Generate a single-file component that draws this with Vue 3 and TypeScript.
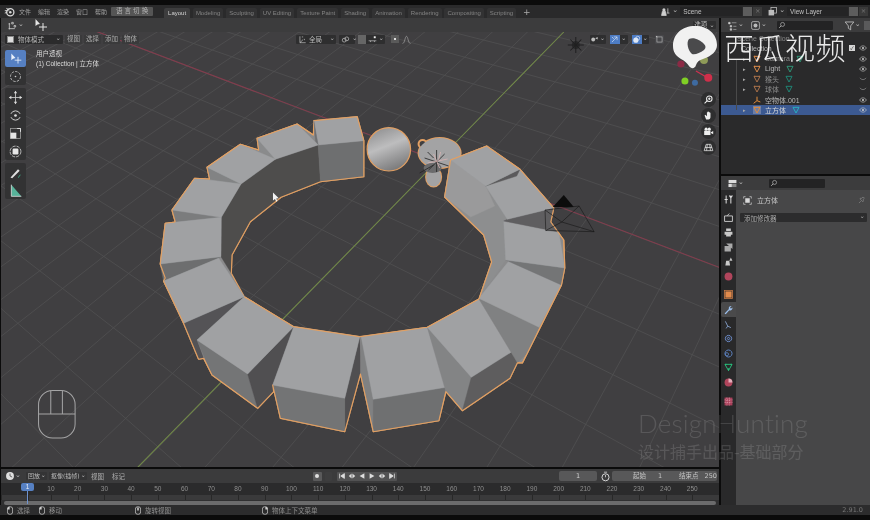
<script setup lang="ts">
type Pt = [number, number]

// ground plane grid, projected from the two vanishing points of the axes
const O: Pt = [437, 161]
const VR: Pt = [-620, -240]
const VG: Pt = [1100, -520]
const a = 0.031
const b = 0.037
const SPLIT = 1.5

const project = (u: number, v: number) => {
  const w = a * u + b * v + 1
  const x = (a * u * VR[0] + b * v * VG[0] + O[0]) / w
  const y = (a * u * VR[1] + b * v * VG[1] + O[1]) / w
  return `${x.toFixed(1)} ${y.toFixed(1)}`
}

// lines nearer than SPLIT go in the first path, the fainter far part in the second
const buildGrid = () => {
  let near = ''
  let far = ''
  for (let u = -30; u <= 30; u++) {
    const vMin = Math.max(-26, (0.05 - 1 - a * u) / b)
    const vCut = Math.min(30, Math.max(vMin, (SPLIT - 1 - a * u) / b))
    near += `M${project(u, vMin)}L${project(u, vCut)}`
    if (vCut < 30) far += `M${project(u, vCut)}L${project(u, 30)}`
  }
  for (let v = -26; v <= 30; v++) {
    const uMin = Math.max(-30, (0.05 - 1 - b * v) / a)
    const uCut = Math.min(30, Math.max(uMin, (SPLIT - 1 - b * v) / a))
    near += `M${project(uMin, v)}L${project(uCut, v)}`
    if (uCut < 30) far += `M${project(uCut, v)}L${project(30, v)}`
  }
  return { near, far }
}
const grid = buildGrid()

const silhouette =
  '313.3,120.7 356.7,116.7 363.3,140.7 363.3,176.7 320,181.7 280.7,197.3 250,221.7 231.7,255 231,273.3 244,296.7 293.3,326.7 359.3,336.7 426.7,327.3 478.3,299 491,262 483,235 444,197 450,160 486,146 519.3,169.3 553,208 550,222 563,240 564,268 560.7,285 521.7,363 516.7,362.7 509.3,378.3 461.7,410.7 445.3,391.7 438.3,420.7 372.7,431.7 360,374 344.3,431.7 280,418.3 272.3,385 273.3,391.7 257.3,408.3 211.7,375 203.3,358.3 198.3,359.3 183.3,323.3 163.3,281 165,278 160,264 165,223.3 175,222 171.7,210 194.3,178.3 209.3,179 206.7,167.3 240,144.3 258.3,150 256.7,138.3 296.7,124 313,135'

const faces: { c: string; p: string }[] = [
  // inner walls of the ring
  { c: '#4e4d4c', p: '221,217.3 240.7,184 275,159.3 317.7,145 320,181.7 280.7,197.3 250,221.7 231.7,255 231,273.3 220.7,256.7' },
  { c: '#8d8e8f', p: '450,160 485,186 506.7,219.3 503,221 505,260 478.3,299 491,262 483,235 444,197' },
  { c: '#9a9a9b', p: '450,160 485,186 494,206 470,217 444,197' },
  // back cubes, left side
  { c: '#6e6f70', p: '317.7,145 363.3,140.7 363.3,176.7 320,181.7' },
  { c: '#a0a1a3', p: '313.3,120.7 356.7,116.7 363.3,140.7 317.7,145' },
  { c: '#6f7071', p: '313.3,120.7 317.7,145 315,141' },
  { c: '#8a8b8c', p: '256.7,138.3 275,159.3 258.3,150' },
  { c: '#a0a1a3', p: '256.7,138.3 296.7,124 317.7,145 275,159.3' },
  { c: '#828384', p: '206.7,167.3 240.7,184 209.3,179' },
  { c: '#a0a1a3', p: '240,144.3 275,159.3 240.7,184 206.7,167.3' },
  { c: '#7b7c7d', p: '171.7,210 221,217.3 175,222' },
  { c: '#a0a1a3', p: '194.3,178.3 240.7,184 221,217.3 171.7,210' },
  { c: '#6d6e6f', p: '160,264 220.7,256.7 163.3,281' },
  { c: '#a0a1a3', p: '165,223.3 221,217.3 220.7,256.7 160,264' },
  // lower left
  { c: '#545356', p: '183.3,323.3 244,296.7 196.7,340 203.3,358.3 198.3,359.3' },
  { c: '#a0a1a3', p: '163.3,281 218.3,258.3 244,296.7 183.3,323.3' },
  { c: '#747576', p: '196.7,340 247.3,374 257.3,408.3 211.7,375' },
  { c: '#504f51', p: '247.3,374 293.3,326.7 272.3,385 273.3,391.7 257.3,408.3' },
  { c: '#a0a1a3', p: '244,296.7 293.3,326.7 247.3,374 196.7,340' },
  // lower middle
  { c: '#504f51', p: '359.3,336.7 344.3,398.3 344.3,431.7 360,374' },
  { c: '#737475', p: '272.3,385 344.3,398.3 344.3,431.7 280,418.3' },
  { c: '#a0a1a3', p: '293.3,326.7 359.3,336.7 344.3,398.3 272.3,385' },
  { c: '#808182', p: '360.7,336.7 372.7,399.3 372.7,431.7 360,374' },
  { c: '#6f7071', p: '372.7,399.3 445.3,387.3 438.3,420.7 372.7,431.7' },
  { c: '#a0a1a3', p: '360.7,336.7 426.7,327.3 445.3,387.3 372.7,399.3' },
  // lower right
  { c: '#838485', p: '426.7,327.3 470.7,377.3 461.7,410.7 445.3,391.7' },
  { c: '#5e5d5e', p: '470.7,377.3 523.3,344 516.7,362.7 509.3,378.3 461.7,410.7' },
  { c: '#a0a1a3', p: '426.7,327.3 478.3,299.3 523.3,344 470.7,377.3' },
  { c: '#808182', p: '478.3,299 538.3,327.3 526.7,353.3 516.7,362.7' },
  { c: '#a0a1a3', p: '478.3,298.3 509,260 560.7,285 538.3,327.3' },
  // right side, going back up
  { c: '#747576', p: '505,260 564,268 560.7,285' },
  { c: '#a0a1a3', p: '503,221 558,232 564,268 505,260' },
  { c: '#5f5e60', p: '506.7,219.3 553,208 550,222 558,232 503,221' },
  { c: '#a0a1a3', p: '485,186 519.3,169.3 553,208 506.7,219.3' },
  { c: '#5b5a5c', p: '485,186 519.3,169.3 516,176' },
  { c: '#a0a1a3', p: '450,160 486,146 519.3,169.3 485,186' }
]

const menus = ['文件', '编辑', '渲染', '窗口', '帮助']
const tabs = ['Layout', 'Modeling', 'Sculpting', 'UV Editing', 'Texture Paint', 'Shading', 'Animation', 'Rendering', 'Compositing', 'Scripting']

interface Row {
  label: string
  icon: string
  tail?: string
  eye?: string
  cls?: string
}
const rows: Row[] = [
  { label: 'Camera', icon: '#d98a4a', tail: '#2f9a7a', cls: 'faded' },
  { label: 'Light', icon: '#d98a4a', tail: '#2f9a7a' },
  { label: '猴头', icon: '#a9714a', tail: '#1f8a78', eye: 'closed', cls: 'faded' },
  { label: '球体', icon: '#a9714a', tail: '#1f8a78', eye: 'closed', cls: 'faded' },
  { label: '空物体.001', icon: '#e08c3c', cls: 'noarrow' },
  { label: '立方体', icon: '#e08c3c', tail: '#27b3c4', cls: 'picked' }
]

const frames = Array.from({ length: 25 }, (_, i) => (i + 1) * 10)

const sideTabs = [
  { id: 'render', c: '#c9c9c9' },
  { id: 'print', c: '#c9c9c9' },
  { id: 'layer', c: '#c9c9c9' },
  { id: 'scene', c: '#c9c9c9' },
  { id: 'world', c: '#b0455c' }
]
const dataTabs = [
  { c: '#7f9ac4', d: 'M3 3l3 6 4 2M3 3h0M6 9l-2 3' },
  { c: '#6f8fd0', d: 'M7 3a4 4 0 1 0 .01 0M7 5.5a1.5 1.5 0 1 0 .01 0' },
  { c: '#5f86c8', d: 'M7 2.5a4.5 4.5 0 1 0 .01 0M5 6a2 2 0 1 0 .01 0' },
  { c: '#27c07c', d: 'M2.5 3h9L7 11zM2.5 3l2 0M11.5 3l-2 0M7 11v-3' }
]
</script>

<template>
  <div class="screen">
    <header class="topbar">
      <svg class="blogo" viewBox="0 0 14 14"><circle cx="8" cy="8" r="4.6" fill="none" stroke="#d8d8d8" stroke-width="1.6" /><circle cx="8" cy="8" r="1.6" fill="#d8d8d8" /><path d="M1 6h5M3 3l4 2M1 9l3-1" stroke="#d8d8d8" stroke-width="1.2" /></svg>
      <nav class="menus"><span v-for="m in menus" :key="m">{{ m }}</span></nav>
      <button class="lang">语 言 切 换</button>
      <nav class="tabs">
        <span v-for="(t, i) in tabs" :key="t" class="tab" :class="{ on: i === 0 }">{{ t }}</span>
        <span class="plus">+</span>
      </nav>
      <div class="selectors">
        <svg class="ico scene-ico" viewBox="0 0 14 14"><circle cx="5" cy="5" r="2" fill="#cfcfcf" /><path d="M2 12l1-5h4l1 5zM10 3v6M9 9h3" stroke="#cfcfcf" fill="#cfcfcf" /></svg>
        <span class="chev">⌄</span>
        <span class="field scene-field">Scene</span>
        <span class="sq lit"></span><span class="sq">×</span>
        <svg class="ico layer-ico" viewBox="0 0 14 14"><rect x="2" y="5" width="7" height="7" fill="#bdbdbd" /><rect x="5" y="2" width="7" height="7" fill="none" stroke="#bdbdbd" /></svg>
        <span class="chev">⌄</span>
        <span class="field layer-field">View Layer</span>
        <span class="sq lit"></span><span class="sq">×</span>
      </div>
    </header>

    <main class="main">
      <div class="left">
        <section class="viewport">
          <svg class="scene" viewBox="1 18 717 449" preserveAspectRatio="none">
            <defs>
              <linearGradient id="ball" x1="0.2" y1="0" x2="0.6" y2="1">
                <stop offset="0" stop-color="#8f8f90" />
                <stop offset="0.45" stop-color="#bdbdbe" />
                <stop offset="1" stop-color="#79797a" />
              </linearGradient>
            </defs>
            <path :d="grid.far" class="grid far" />
            <path :d="grid.near" class="grid" />
            <line x1="90" y1="29" x2="720" y2="268" class="axis-x" />
            <line x1="563" y1="32" x2="130" y2="475" class="axis-y" />

            <g class="sun">
              <circle cx="575" cy="45" r="4" />
              <path d="M575 37v16M567 45h16M569.5 39.5l11 11M580.5 39.5l-11 11" />
            </g>

            <circle cx="388.3" cy="149.3" r="21.7" fill="url(#ball)" stroke="#e2a063" stroke-width="1.2" />

            <g class="monkey">
              <circle cx="422" cy="144" r="5" />
              <ellipse cx="439" cy="153" rx="22" ry="16" />
              <ellipse cx="433" cy="177" rx="8.500" ry="10.500" />
              <circle cx="422" cy="144" r="3" class="hole" />
              <ellipse cx="439" cy="153" rx="21" ry="15" class="inner" />
              <ellipse cx="433" cy="177" rx="7.500" ry="9.500" class="inner" />
              <ellipse cx="432" cy="168" rx="9" ry="5" class="shade" />
            </g>
            <path class="light-a" d="M436 150v22M424 158l24 8M428 170l16-16M419 173l14-8M433 158l-6-6" />
            <path class="light-b" d="M433 154l6 14M427 163l20-4M440 152l-2 8" />

            <polygon :points="silhouette" class="outline" />
            <polygon v-for="(f, i) in faces" :key="i" :points="f.p" :fill="f.c" :stroke="f.c" stroke-width="0.4" />
            <polyline points="320,181.7 280.7,197.3 250,221.7 231.7,255 231,273.3" class="edge" />
            <polyline points="244,296.7 293.3,326.7 359.3,336.7 426.7,327.3 478.3,299" class="edge" />
            <polyline points="313.3,120.7 356.7,116.7 363.3,140.7 363.3,176.7 320,181.7" class="edge" />
            <polyline points="171.7,210 194.3,178.3 209.3,179 206.7,167.3 240,144.3 258.3,150 256.7,138.3 296.7,124 313,135" class="edge" />
            <polyline points="175,222 171.7,210" class="edge" />
            <polyline points="198.3,359.3 183.3,323.3 163.3,281 165,278 160,264 165,223.3 175,222" class="edge" />
            <polyline points="198.3,359.3 203.3,358.3 211.7,375 257.3,408.3 273.3,391.7 272.3,385 280,418.3 344.3,431.7 360,374 372.7,431.7 438.3,420.7 445.3,391.7 461.7,410.7 509.3,378.3 516.7,362.7 521.7,363 560.7,285 564,268 563,240 550,222 553,208 519.3,169.3 486,146 450,160 444,197 483,235 491,262 478.3,299" class="edge" />

            <polygon points="563,195 552,207 573,207" fill="#0c0c0c" />
            <path class="camera" d="M544.3 210L578.3 206L593.3 231.7L545 230.5ZM544.3 210L561 222L545 230.5M578.3 206L561 222L593.3 231.7" />

            <path d="M272.6 192.500l0 8 2-1.600 1.300 2.800 1.200-.6-1.300-2.700 2.600-.1z" fill="#f2f2f2" />

            <g class="mouse">
              <rect x="38.500" y="390.500" width="36.500" height="47.500" rx="14" />
              <path d="M38.500 414h36.500M50.700 390.500V414M62.300 390.500V414" />
            </g>

            <g class="nav-gizmo">
              <line x1="695" y1="71" x2="707" y2="78" stroke="#cf3150" stroke-width="1.300" />
              <circle cx="680" cy="64" r="3.600" fill="#8b2a45" />
              <circle cx="693.300" cy="59" r="4" fill="#86a8d8" />
              <circle cx="703" cy="60" r="4" fill="#8e9a58" />
              <circle cx="684" cy="81" r="3.500" fill="#80cf25" />
              <circle cx="694" cy="82.700" r="3" fill="#3e6aa0" />
              <circle cx="707.300" cy="77.700" r="4" fill="#cf2f4a" />
            </g>
          </svg>

          <div class="tool-header">
            <svg class="ico t-a" viewBox="0 0 14 14"><path d="M2 11h8M3 12V4M2 5h2M6 3h2v2H6zM9 7h2v2H9z" stroke="#cfcfcf" fill="none" /></svg>
            <span class="chev">⌄</span>
            <svg class="ico t-b" viewBox="0 0 14 14"><path d="M1.500 1v7l2-1.500L6 6z" fill="#e6e6e6" /><path d="M9 5v8M5 9h8" stroke="#e6e6e6" /></svg>
            <span class="opts">选项 ⌄</span>
          </div>

          <div class="view-header">
            <div class="v-left">
              <span class="mode"><i class="obj"></i>物体模式<em>⌄</em></span>
              <span class="vbtn" v-for="m in ['视图', '选择', '添加', '物体']" :key="m">{{ m }}</span>
            </div>
            <div class="v-mid">
              <span class="pill global"><svg class="ico" viewBox="0 0 14 14"><path d="M3 2v10h9M3 12l5-5M6 3h2M10 6v2" stroke="#cfcfcf" fill="none" /></svg>全局<em>⌄</em></span>
              <span class="pill link"><svg class="ico" viewBox="0 0 14 14"><circle cx="5" cy="8" r="3" fill="none" stroke="#cfcfcf" /><circle cx="9" cy="6" r="3" fill="none" stroke="#cfcfcf" /></svg><em>⌄</em></span>
              <span class="pill snap"><b class="snap-a"></b><svg class="ico" viewBox="0 0 14 14"><path d="M1 9h12M4 9v2M10 9v2" stroke="#cfcfcf" /><rect x="9" y="2" width="3" height="3" fill="#eee" /></svg><em>⌄</em></span>
              <span class="prop"><b class="dot"></b><svg class="ico" viewBox="0 0 14 14"><path d="M2 12c3 0 3-9 5-9s2 9 5 9" stroke="#9a9a9a" fill="none" /></svg></span>
            </div>
            <div class="v-right">
              <span class="gz"><svg class="ico" viewBox="0 0 14 14"><circle cx="5" cy="7" r="3" fill="#bdbdbd" /><path d="M8 5l4-2v4z" fill="#bdbdbd" /></svg><em>⌄</em></span>
              <span class="gz"><b class="blue"><svg class="ico" viewBox="0 0 14 14"><path d="M3 11l8-8M6 3h5v5M3 3l3 3" stroke="#dfe8f5" fill="none" /></svg></b><em>⌄</em></span>
              <span class="gz"><b class="blue"><svg class="ico" viewBox="0 0 14 14"><circle cx="6" cy="8" r="4" fill="#dfe8f5" /><circle cx="9" cy="5" r="3" fill="none" stroke="#dfe8f5" /></svg></b><em>⌄</em></span>
              <span class="gz box"><svg class="ico" viewBox="0 0 14 14"><rect x="3" y="3" width="8" height="8" fill="none" stroke="#bbb" /><rect x="1.500" y="1.500" width="2" height="2" fill="#bbb" /></svg></span>
            </div>
          </div>

          <div class="stats">
            <p>用户透视</p>
            <p>(1) Collection | 立方体</p>
          </div>

          <aside class="tools">
            <div class="tgroup">
              <span class="tool active"><svg viewBox="0 0 18 18"><path d="M4 3v8l2-1.600L9 8.500z" fill="#eaf1fb" /><path d="M12 7v8M8 11h8" stroke="#eaf1fb" /></svg></span>
              <span class="tool"><svg viewBox="0 0 18 18"><circle cx="9" cy="9" r="6" fill="none" stroke="#cfcfcf" stroke-dasharray="3 1.500" /><circle cx="9" cy="9" r="1" fill="#cfcfcf" /></svg></span>
            </div>
            <div class="tgroup">
              <span class="tool"><svg viewBox="0 0 18 18"><path d="M9 2v14M2 9h14" stroke="#cfcfcf" /><path d="M9 1l2 3H7zM9 17l2-3H7zM1 9l3-2v4zM17 9l-3-2v4z" fill="#dedede" /></svg></span>
              <span class="tool"><svg viewBox="0 0 18 18"><path d="M3.500 7a6 6 0 0 1 11 0M3.500 11a6 6 0 0 0 11 0" stroke="#cfcfcf" fill="none" stroke-width="1.200" /><circle cx="9" cy="9" r="1.600" fill="#dedede" /></svg></span>
              <span class="tool"><svg viewBox="0 0 18 18"><rect x="3" y="3" width="12" height="12" fill="none" stroke="#999" /><rect x="3" y="8" width="7" height="7" fill="#e5e5e5" /><path d="M11 3h4v4" stroke="#eee" fill="none" /></svg></span>
              <span class="tool"><svg viewBox="0 0 18 18"><circle cx="9" cy="9" r="6.500" fill="none" stroke="#cfcfcf" stroke-dasharray="4 1.200" /><rect x="5.500" y="5.500" width="7" height="7" rx="1.500" fill="#e6e6e6" /></svg></span>
            </div>
            <div class="tgroup">
              <span class="tool"><svg viewBox="0 0 18 18"><path d="M3 15L12 5l2 2-9 9z" fill="#e0e0e0" /><path d="M12 15c2 0 1-3 3-3" stroke="#3fb08a" fill="none" /></svg></span>
              <span class="tool"><svg viewBox="0 0 18 18"><path d="M4 2v14h12z" fill="#57b39a" /><path d="M4 2v14h12" stroke="#d8d8d8" fill="none" /></svg></span>
            </div>
          </aside>

          <aside class="navs">
            <span class="nbtn"><svg viewBox="0 0 14 14"><circle cx="8" cy="6" r="3.500" fill="none" stroke="#eee" stroke-width="1.300" /><path d="M5.500 8.500L2 12M8 4.500v3M6.500 6h3" stroke="#eee" stroke-width="1.300" /></svg></span>
            <span class="nbtn"><svg viewBox="0 0 14 14"><path d="M4 12L2 7l1-1 2 2V3h1v3-4h1.200v4-3.500h1.200V6V3.500h1.100V9c0 2-1 3-2.500 3z" fill="#eee" /></svg></span>
            <span class="nbtn"><svg viewBox="0 0 14 14"><rect x="1.500" y="6" width="8" height="5.500" fill="#eee" /><circle cx="4" cy="4" r="2" fill="#eee" /><circle cx="8" cy="4" r="2" fill="#eee" /><path d="M10 8l3-1.500v4L10 9z" fill="#eee" /></svg></span>
            <span class="nbtn"><svg viewBox="0 0 14 14"><path d="M4 3h6l2.500 8h-11zM2.500 7h9M5.500 3l-1 8M8.500 3l1 8" stroke="#dcdcdc" fill="none" /></svg></span>
          </aside>
        </section>

        <section class="timeline">
          <div class="tl-head">
            <svg class="ico clock" viewBox="0 0 14 14"><circle cx="7" cy="7" r="5.500" fill="#e0e0e0" /><path d="M7 3.500V7l3 1.500" stroke="#333" fill="none" /></svg>
            <span class="chev">⌄</span>
            <span class="tbtn play">回放<em>⌄</em></span>
            <span class="tbtn key">抠像(插帧)<em>⌄</em></span>
            <span class="tplain first">视图</span>
            <span class="tplain">标记</span>
            <div class="transport">
              <span class="rec"><i></i></span>
              <span class="rec off"></span>
              <span class="tr-row">
                <svg viewBox="0 0 10 10"><path d="M2 2v6M8 2v6L3.500 5z" stroke="#ddd" fill="#ddd" /></svg>
                <svg viewBox="0 0 10 10"><path d="M4.500 2v6L1 5zM5.500 2v6L9 5z" fill="#ddd" /></svg>
                <svg viewBox="0 0 10 10"><path d="M8 1.500v7L2 5z" fill="#ddd" /></svg>
                <svg viewBox="0 0 10 10"><path d="M2 1.500v7L8 5z" fill="#ddd" /></svg>
                <svg viewBox="0 0 10 10"><path d="M4.500 2v6L1 5zM5.500 2v6L9 5z" fill="#ddd" /></svg>
                <svg viewBox="0 0 10 10"><path d="M8 2v6M2 2v6L6.500 5z" stroke="#ddd" fill="#ddd" /></svg>
              </span>
            </div>
            <div class="range">
              <span class="rfield cur">1</span>
              <svg class="ico stopwatch" viewBox="0 0 14 14"><circle cx="7" cy="8" r="4.500" fill="none" stroke="#ddd" stroke-width="1.200" /><path d="M5 1.500h4M7 5v3" stroke="#ddd" /></svg>
              <span class="rfield span"><i>起始</i><i>1</i><u></u><i>结束点</i><i>250</i></span>
            </div>
          </div>
          <div class="ruler">
            <span v-for="f in frames" :key="f" class="mark">{{ f }}</span>
          </div>
          <div class="ticks"></div>
          <div class="scroll"><i></i></div>
          <div class="playhead"><b>1</b></div>
        </section>
      </div>

      <div class="right">
        <section class="outliner">
          <div class="o-head">
            <svg class="ico" viewBox="0 0 14 14"><path d="M2 3h2v2H2zM6 3.500h6M4 7h2v2H4zM8 8h4M4 11h2v2H4zM8 12h4" fill="#ccc" stroke="#ccc" stroke-width="0.700" /></svg>
            <span class="chev">⌄</span>
            <svg class="ico disp" viewBox="0 0 14 14"><rect x="2" y="2" width="10" height="10" rx="2" fill="none" stroke="#bbb" /><circle cx="7" cy="7" r="2.500" fill="#bbb" /></svg>
            <span class="chev">⌄</span>
            <span class="search"><svg viewBox="0 0 14 14"><circle cx="8" cy="6" r="3.500" fill="none" stroke="#ccc" /><path d="M5.500 8.500L2 12" stroke="#ccc" stroke-width="1.300" /></svg></span>
            <svg class="ico filter" viewBox="0 0 14 14"><path d="M1.500 2.500h11l-4 5v5l-3-2v-3z" fill="none" stroke="#c9c9c9" /></svg>
            <span class="chev">⌄</span>
            <span class="newcol"></span>
          </div>
          <div class="o-body">
            <div class="orow scenecol">Scene Collection</div>
            <div class="orow coll">
              <span class="olabel">Collection</span>
              <i class="check">✓</i>
              <svg class="eye" viewBox="0 0 14 10"><path d="M1 5c3-5 9-5 12 0-3 5-9 5-12 0z" fill="none" stroke="#cfcfcf" /><circle cx="7" cy="5" r="1.800" fill="#cfcfcf" /></svg>
            </div>
            <div v-for="r in rows" :key="r.label" class="orow item" :class="r.cls">
              <span class="arrow">▸</span>
              <svg class="rico" viewBox="0 0 12 12"><path v-if="r.label !== '空物体.001'" d="M1.500 2h9L6 10.500zM1.500 2h2M10.500 2h-2" :stroke="r.icon" fill="none" stroke-width="1.500" /><path v-else d="M6 1v6M6 7L1 11M6 7l5 2" :stroke="r.icon" fill="none" stroke-width="1.500" /></svg>
              <span class="olabel">{{ r.label }}</span>
              <svg v-if="r.tail" class="rtail" viewBox="0 0 12 12"><path d="M1.500 2h9L6 10.500z" :stroke="r.tail" fill="none" stroke-width="1.400" /></svg>
              <svg class="eye" viewBox="0 0 14 10">
                <path v-if="r.eye === 'closed'" d="M1.500 3c3 4 8 4 11 0" fill="none" stroke="#a9a9a9" />
                <template v-else><path d="M1 5c3-5 9-5 12 0-3 5-9 5-12 0z" fill="none" stroke="#cfcfcf" /><circle cx="7" cy="5" r="1.800" fill="#cfcfcf" /></template>
              </svg>
            </div>
          </div>
          <i class="tree-line"></i>
        </section>

        <section class="props">
          <div class="p-head">
            <svg class="ico" viewBox="0 0 14 14"><rect x="2" y="2.500" width="10" height="4" fill="#ddd" /><rect x="2" y="7.500" width="10" height="4" fill="#888" /><rect x="2" y="7.500" width="4" height="4" fill="#ddd" /></svg>
            <span class="chev">⌄</span>
            <span class="search"><svg viewBox="0 0 14 14"><circle cx="8" cy="6" r="3.500" fill="none" stroke="#ccc" /><path d="M5.500 8.500L2 12" stroke="#ccc" stroke-width="1.300" /></svg></span>
          </div>
          <div class="p-body">
            <nav class="p-tabs">
              <span class="ptab top"><svg viewBox="0 0 14 14"><path d="M4 2v10M2 7h4M10 2v3M8 2l2 3 2-3M10 5v7" stroke="#dcdcdc" fill="none" stroke-width="1.300" /></svg></span>
              <span v-for="t in sideTabs" :key="t.id" class="ptab">
                <svg viewBox="0 0 14 14">
                  <path v-if="t.id === 'render'" d="M2 5h10v7H2zM5 5l3-3" fill="none" :stroke="t.c" stroke-width="1.200" />
                  <path v-else-if="t.id === 'print'" d="M4 2h6v3H4zM2 6h10v4H2zM4 9h6v3H4z" :fill="t.c" />
                  <path v-else-if="t.id === 'layer'" d="M2 5h8v7H2zM4 2h8v7" :fill="t.c" opacity="0.800" />
                  <path v-else-if="t.id === 'scene'" d="M3 12l1-6h4l1 6zM10 2l2 4-4 0z" :fill="t.c" />
                  <circle v-else cx="7" cy="7" r="5" :fill="t.c" />
                </svg>
              </span>
              <span class="ptab gap"><svg viewBox="0 0 14 14"><rect x="3" y="3" width="8" height="8" fill="#e08a4c" /><rect x="2" y="2" width="10" height="10" fill="none" stroke="#c77a45" /></svg></span>
              <span class="ptab on"><svg viewBox="0 0 14 14"><path d="M2 12l5.500-5.500c-.8-2 .8-4.500 3.500-4L9 4.500 10 6l2-1.500c.5 2.500-2 4.500-4 3.500L3.500 13z" fill="#9cc0ee" /></svg></span>
              <span v-for="(t, i) in dataTabs" :key="i" class="ptab"><svg viewBox="0 0 14 14"><path :d="t.d" fill="none" :stroke="t.c" stroke-width="1.200" /></svg></span>
              <span class="ptab"><svg viewBox="0 0 14 14"><circle cx="7" cy="7" r="5" fill="#b0455c" /><path d="M7 7V2a5 5 0 0 1 5 5z" fill="#e3b0bc" /></svg></span>
              <span class="ptab gap"><svg viewBox="0 0 14 14"><rect x="2" y="2" width="10" height="10" fill="#a8405a" /><path d="M2 5h10M2 8h10M5 2v10M8 2v10" stroke="#e6a4b4" stroke-dasharray="1.500 1.500" /></svg></span>
            </nav>
            <div class="p-main">
              <div class="p-title">
                <svg class="ico obj-ico" viewBox="0 0 14 14"><rect x="3.500" y="3.500" width="7" height="7" fill="#d9d9d9" /><path d="M1 4V1h3M10 1h3v3M13 10v3h-3M4 13H1v-3" fill="none" stroke="#d9d9d9" /></svg>
                <span>立方体</span>
                <svg class="ico pin" viewBox="0 0 14 14"><path d="M3 11l3-3M5 5l4 4 1-1-.5-2.500 2-2L9.500 1.500l-2 2L5 3.500z" fill="none" stroke="#8d8d8d" /></svg>
              </div>
              <div class="addmod"><span>添加修改器</span><em>⌄</em></div>
            </div>
          </div>
        </section>
      </div>
    </main>

    <footer class="status">
      <span class="hint h1"><svg viewBox="0 0 8 11"><rect x="0.500" y="0.500" width="7" height="10" rx="3" fill="none" stroke="#cfcfcf" /><path d="M.5 4V3.500a3 3 0 0 1 3-3V4z" fill="#cfcfcf" /></svg>选择</span>
      <span class="hint h2"><svg viewBox="0 0 8 11"><rect x="0.500" y="0.500" width="7" height="10" rx="3" fill="none" stroke="#cfcfcf" /><path d="M.5 4V3.500a3 3 0 0 1 3-3V4z" fill="#cfcfcf" /></svg>移动</span>
      <span class="hint h3"><svg viewBox="0 0 8 11"><rect x="0.500" y="0.500" width="7" height="10" rx="3" fill="none" stroke="#cfcfcf" /><rect x="3" y="1.500" width="2" height="4" fill="#cfcfcf" /></svg>旋转视图</span>
      <span class="hint h4"><svg viewBox="0 0 8 11"><rect x="0.500" y="0.500" width="7" height="10" rx="3" fill="none" stroke="#cfcfcf" /><path d="M7.500 4V3.500a3 3 0 0 0-3-3V4z" fill="#cfcfcf" /></svg>物体上下文菜单</span>
      <span class="ver">2.91.0</span>
    </footer>

    <!-- video watermarks sit over every panel -->
    <div class="xigua">
      <svg class="xg-logo" viewBox="0 0 46 44"><path d="M23 1C10 1 1 9 1 21c0 6 3 10 8 13 4 2 6 4 8 7 2 3 6 3 7-1 1-3 3-5 7-6 9-3 14-8 14-14C45 9 36 1 23 1z" fill="#f1f1f1" /><path d="M17 14c5-2 11 1 15 5 2 2 2 4 0 6-4 3-9 5-12 4-4-3-6-12-3-15z" fill="#4a4a4c" /></svg>
      <span class="xg-text">西瓜视频</span>
    </div>
    <div class="brand-hunt">
      <p class="dh">DesignHunting</p>
      <p class="dh-cn">设计捕手出品-基础部分</p>
    </div>
  </div>
</template>

<style scoped>
.screen {
  width: 870px;
  height: 520px;
  background: #0b0b0b;
  overflow: hidden;
  position: relative;
  display: flex;
  flex-direction: column;
  padding: 5px 0;
  box-sizing: border-box;
  font-family: "DejaVu Sans", "Noto Sans CJK SC", sans-serif;
  font-size: 6.5px;
  color: #bdbdbd;
  filter: blur(0.35px);
}
p { margin: 0; }
em { font-style: normal; }
.ico { width: 11px; height: 11px; flex: none; }
.chev { font-size: 7px; color: #bbb; line-height: 6px; margin-top: -3px; }

.topbar {
  height: 13px;
  background: #2a2a2b;
  display: flex;
  align-items: center;
  flex: none;
}
.blogo { width: 11px; height: 11px; margin-left: 4px; flex: none; }
.menus { display: flex; gap: 7px; margin-left: 4px; color: #a0a0a0; font-size: 6px; }
.lang {
  margin-left: 4px;
  width: 42px;
  height: 9px;
  padding: 0;
  border: 0;
  border-radius: 1px;
  background: #555;
  color: #b5b5b5;
  font: inherit;
  line-height: 9px;
}
.tabs { display: flex; margin-left: 11px; align-self: flex-end; height: 10px; }
.tab { padding: 0 3.200px; line-height: 10px; color: #848484; margin-right: 2.600px; border-radius: 2px 2px 0 0; background: #323233; font-family: "Liberation Sans", sans-serif; font-size: 6px; }
.tab.on { background: #3d3d3e; color: #d5d5d5; padding: 0 4px; }
.plus { color: #aaa; font-size: 9px; line-height: 9px; margin-left: 4px; }
.selectors { margin-left: auto; display: flex; align-items: center; padding-right: 2px; }
.scene-ico, .layer-ico { margin-right: 1px; }
.field { height: 9px; line-height: 9px; background: #242425; color: #c0c0c0; padding-left: 3px; box-sizing: border-box; margin-left: 2px; font-family: "Liberation Sans", sans-serif; }
.scene-field { width: 62px; }
.layer-field { width: 61px; }
.sq { width: 9px; height: 9px; margin-left: 1px; background: #3a3a3a; color: #777; line-height: 8px; text-align: center; }
.sq.lit { background: #5d5d5d; }
.sq + .layer-ico { margin-left: 5px; }

.main { flex: 1; display: flex; min-height: 0; }
.left { width: 719px; flex: none; padding-left: 1px; box-sizing: border-box; display: flex; flex-direction: column; gap: 2px; }
.right { width: 149px; margin-left: 2px; display: flex; flex-direction: column; gap: 2px; flex: none; }

/* 3D view */
.viewport { height: 449px; flex: none; position: relative; overflow: hidden; background: #403f41; }
.scene { position: absolute; inset: 0; width: 100%; height: 100%; display: block; }
.grid { stroke: #505052; stroke-width: 0.800; fill: none; }
.grid.far { stroke: #49494b; stroke-width: 0.600; }
.axis-x { stroke: #843c4d; stroke-width: 1; }
.axis-y { stroke: #738c48; stroke-width: 1; }
.sun path { stroke: #1f1f20; stroke-width: 1; }
.sun circle { fill: #2a2a2b; }
.monkey > * { fill: #e2a063; }
.monkey .inner { fill: #a3a3a4; }
.monkey .hole { fill: #403f41; }
.monkey .shade { fill: #6b6b6c; }
.light-a { stroke: #222; stroke-width: 0.800; fill: none; }
.light-b { stroke: #d9b3b3; stroke-width: 0.800; fill: none; }
.outline { fill: #8b8b8c; stroke: #e2a063; stroke-width: 1.200; stroke-linejoin: round; }
.edge { fill: none; stroke: #e2a063; stroke-width: 1.100; stroke-linejoin: round; }
.camera { fill: none; stroke: #161616; stroke-width: 0.600; }
.mouse { fill: none; stroke: #a5a5a6; stroke-width: 1; }

.tool-header {
  position: relative;
  height: 14px;
  background: #3c3c3d;
  display: flex;
  align-items: center;
  padding-left: 6px;
}
.t-b { margin-left: 10px; width: 14px; height: 14px; }
.opts { margin-left: auto; margin-right: 3px; width: 23px; height: 8px; background: #2e2e2f; line-height: 8px; text-align: center; border-radius: 1px; }

.view-header { position: relative; height: 14px; display: flex; align-items: center; padding-left: 4px; }
.v-left { display: flex; gap: 2px; width: 291px; }
.mode { width: 58px; height: 9px; background: #2b2b2c; border-radius: 1px; display: flex; align-items: center; color: #b5b5b5; }
.obj { width: 5px; height: 5px; background: #ddd; margin: 0 5px 0 3px; outline: 1px solid #888; }
.mode em { margin-left: auto; margin-right: 2px; margin-top: -3px; }
.vbtn { width: 17px; height: 9px; background: #3a3a3b; line-height: 9px; text-align: center; border-radius: 1px; color: #aaa; }
.v-mid { display: flex; align-items: center; gap: 3px; }
.pill { height: 9px; background: #2e2e2f; border-radius: 1px; display: flex; align-items: center; color: #bbb; }
.pill em { margin: -3px 1px 0 auto; }
.pill .ico { width: 9px; height: 9px; margin: 0 2px; }
.global { width: 40px; }
.link { width: 16px; }
.snap { width: 27px; }
.snap-a { width: 9px; height: 9px; background: #666; }
.prop { display: flex; align-items: center; margin-left: 3px; width: 21px; }
.dot { width: 8px; height: 8px; background: #5a5a5a; position: relative; }
.dot::after { content: ""; display: block; width: 2px; height: 2px; margin: 3px; background: #ddd; }
.prop .ico { margin-left: 2px; }
.v-right { margin-left: auto; margin-right: 55px; display: flex; align-items: center; gap: 4px; }
.gz { display: flex; align-items: center; color: #bbb; height: 9px; background: #2e2e2f; border-radius: 1px; }
.gz .ico { width: 9px; height: 9px; display: block; }
.gz em { margin: -3px 1px 0; }
.blue { display: block; background: #4d7cc4; width: 10px; height: 9px; }
.box { background: #47474a; margin-left: 2px; }

.stats { position: relative; padding-left: 35px; margin-top: 3px; color: #dcdcdc; font-size: 6.500px; line-height: 10px; font-family: "Liberation Sans", "Noto Sans CJK SC", sans-serif; }

.tools {
  position: absolute;
  left: 4px;
  top: 32px;
  display: flex;
  flex-direction: column;
  gap: 3px;
}
.tgroup { background: #323233; border-radius: 2px; display: flex; flex-direction: column; width: 21px; }
.tool { height: 18px; display: flex; align-items: center; justify-content: center; border-radius: 2px; }
.tool svg { width: 15px; height: 15px; }
.tool.active { background: #5680c2; height: 17px; }

.navs { position: absolute; right: 3px; top: 74px; display: flex; flex-direction: column; gap: 1px; }
.nbtn { width: 15px; height: 15px; border-radius: 50%; background: #2e2e2f; display: flex; align-items: center; justify-content: center; }
.nbtn svg { width: 11px; height: 11px; }

/* timeline */
.timeline { flex: 1; position: relative; background: #3b3b3c; display: flex; flex-direction: column; overflow: hidden; }
.tl-head { height: 14px; display: flex; align-items: center; padding-left: 4px; flex: none; }
.clock { width: 10px; height: 10px; }
.tbtn { height: 8px; line-height: 8px; background: #343435; border-radius: 1px; display: flex; color: #bbb; padding-left: 2px; box-sizing: border-box; white-space: nowrap; font-size: 6px; }
.tbtn em { margin: -1px 1px 0 auto; }
.play { width: 21px; margin-left: 5px; }
.key { width: 38px; margin-left: 2px; }
.tplain { margin-left: 8px; color: #b0b0b0; }
.tplain.first { margin-left: 4px; }
.transport { margin-left: 188px; display: flex; align-items: center; gap: 3px; }
.rec { width: 9px; height: 9px; background: #5a5a5b; display: flex; align-items: center; justify-content: center; border-radius: 1px; }
.rec i { width: 4px; height: 4px; border-radius: 50%; background: #e0e0e0; }
.rec.off { width: 7px; background: #3e3e3f; margin-right: 2px; }
.tr-row { display: flex; background: #525253; height: 9px; border-radius: 1px; width: 60px; justify-content: space-around; align-items: center; }
.tr-row svg { width: 8px; height: 8px; }
.range { margin-left: auto; margin-right: 2px; display: flex; align-items: center; }
.rfield { height: 10px; line-height: 10px; background: #585859; border-radius: 2px; color: #d2d2d2; text-align: center; }
.cur { width: 38px; }
.stopwatch { margin: 0 1px 0 3px; }
.span { width: 105px; display: flex; font-style: normal; padding-left: 21px; box-sizing: border-box; color: #c5c5c5; }
.span i { font-style: normal; }
.span i:nth-child(2) { margin-left: 12px; }
.span u { width: 17px; }
.span i:nth-child(5) { margin-left: 6px; }

.ruler { height: 12px; background: #2b2b2c; display: flex; padding-left: 36.600px; color: #8f8f8f; flex: none; font-size: 6.500px; font-family: "Liberation Sans", sans-serif; }
.mark { flex: 0 0 26.720px; text-align: center; line-height: 12px; }
.ticks {
  height: 5px;
  flex: none;
  background-color: #3a3a3b;
  background-image: repeating-linear-gradient(90deg, #282828 0 1px, transparent 1px 26.720px);
  background-position: 50px 0;
}
.scroll { height: 6px; background: #303031; padding: 1px 3px; box-sizing: border-box; flex: none; }
.scroll i { display: block; height: 4px; border-radius: 2px; background: #6b6b6c; }
.playhead { position: absolute; left: 20px; top: 14px; width: 13px; }
.playhead b { display: block; height: 8px; background: #5680c2; color: #e9eef7; font-weight: 400; line-height: 8px; text-align: center; border-radius: 2px; font-family: "Liberation Sans", sans-serif; }
.playhead::after { content: ""; display: block; width: 1px; height: 13px; margin-left: 6px; background: #6f93cf; }

/* outliner */
.outliner { height: 156px; flex: none; background: #2a2a2b; position: relative; display: flex; flex-direction: column; }
.o-head { height: 14px; background: #3c3c3d; display: flex; align-items: center; padding-left: 6px; flex: none; }
.disp { margin-left: 6px; }
.search { width: 56px; height: 9px; background: #232324; margin-left: 10px; display: flex; align-items: center; border-radius: 1px; flex: none; }
.search svg { width: 8px; height: 8px; margin-left: 1px; }
.filter { margin-left: 11px; }
.newcol { width: 9px; height: 9px; margin-left: 3px; background: #5a5a5b; }
.o-body { display: flex; flex-direction: column; padding-top: 1px; }
.orow { height: 10.250px; display: flex; align-items: center; color: #b9b9b9; font-family: "Liberation Sans", "Noto Sans CJK SC", sans-serif; font-size: 7px; flex: none; }
.scenecol { padding-left: 16px; color: #888; }
.coll { padding-left: 20px; }
.coll .check { margin-left: auto; margin-right: 4px; width: 6px; height: 6px; background: #d5d5d5; color: #222; font-style: normal; font-size: 5px; line-height: 6px; text-align: center; }
.eye { width: 8px; height: 6px; margin-right: 3px; flex: none; }
.item { padding-left: 22px; }
.arrow { font-size: 5px; width: 10px; color: #aaa; }
.noarrow .arrow { visibility: hidden; }
.rico { width: 8px; height: 8px; margin-right: 4px; flex: none; }
.rtail { width: 8px; height: 8px; margin-left: 6px; flex: none; }
.item .eye { margin-left: auto; }
.faded { color: #8e8e8e; }
.picked { background: #3c5a92; color: #d8d8d8; }
.picked .rico { background: #6d7fa6; }
.tree-line { position: absolute; left: 15px; top: 42px; width: 1px; height: 50px; background: #4a4a4a; }

/* properties */
.props { flex: 1; display: flex; flex-direction: column; background: #474748; min-height: 0; }
.p-head { height: 14px; background: #3c3c3d; display: flex; align-items: center; padding-left: 6px; flex: none; }
.p-head .search { margin-left: 25px; }
.p-body { flex: 1; display: flex; min-height: 0; }
.p-tabs { width: 15px; background: #29292a; display: flex; flex-direction: column; align-items: center; padding-top: 2.500px; flex: none; }
.ptab { width: 15px; height: 14.600px; display: flex; align-items: center; justify-content: center; flex: none; }
.ptab svg { width: 11px; height: 11px; }
.ptab.top { margin-bottom: 3.500px; }
.ptab.gap { margin-top: 4px; }
.ptab.on { background: #4a4a4b; border-radius: 2px 0 0 2px; }
.p-main { flex: 1; padding: 3px 3px 0 4px; }
.p-title { display: flex; align-items: center; height: 14px; color: #c8c8c8; font-size: 7px; margin-left: 0; }
.obj-ico { margin-right: 5px; margin-left: 3px; width: 9px; height: 9px; }
.pin { margin-left: auto; margin-right: 1px; width: 9px; height: 9px; }
.addmod { margin-top: 6px; height: 9px; background: #2c2c2d; color: #aaa; display: flex; align-items: center; padding-left: 4px; border-radius: 1px; }
.addmod em { margin: -3px 2px 0 auto; }

/* status bar */
.status { height: 10px; background: #2c2c2d; flex: none; display: flex; align-items: center; color: #8f8f8f; }
.hint { display: flex; align-items: center; gap: 4px; }
.hint svg { width: 6px; height: 9px; }
.h1 { margin-left: 7px; }
.h2 { margin-left: 9px; }
.h3 { margin-left: 73px; }
.h4 { margin-left: 91px; }
.ver { margin-left: auto; margin-right: 7px; color: #777; }

.xigua { position: absolute; left: 672px; top: 25px; display: flex; pointer-events: none; }
.xg-logo { width: 46px; height: 44px; flex: none; }
.xg-text { margin-left: 6px; margin-top: 2px; font-family: "Noto Sans CJK SC", sans-serif; font-weight: 300; font-size: 30px; line-height: 38px; color: rgba(255, 255, 255, 0.9); letter-spacing: 0.500px; white-space: nowrap; }

.brand-hunt { position: absolute; left: 638px; top: 408px; white-space: nowrap; pointer-events: none; color: rgba(255, 255, 255, 0.13); }
.dh { font-family: "Lato", sans-serif; font-weight: 300; font-size: 26px; line-height: 30px; letter-spacing: 0.200px; }
.dh-cn { font-family: "Noto Sans CJK SC", sans-serif; font-size: 16px; line-height: 18px; margin-top: 4px; }
</style>
